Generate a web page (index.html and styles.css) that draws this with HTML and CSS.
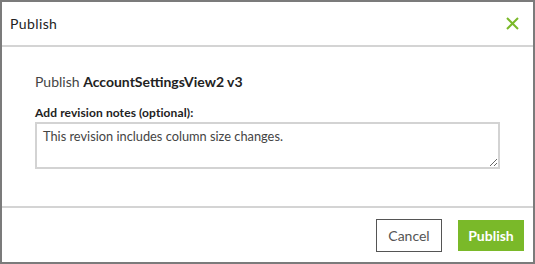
FILE: index.html
```html
<!DOCTYPE html>
<html lang="en">
<head>
<meta charset="UTF-8" />
<title>Publish</title>
<link rel="stylesheet" href="styles.css">
</head>
<body>
<div class="dialog">
  <div class="dialog-header">
    <span class="dialog-title">Publish</span>
    <button class="close" aria-label="Close">
      <svg width="13" height="13" viewBox="0 0 13 13"><path d="M1 1 L12 12 M12 1 L1 12" stroke="#7ab929" stroke-width="2" fill="none"/></svg>
    </button>
  </div>
  <div class="dialog-body">
    <p class="subject">Publish <b>AccountSettingsView2 v3</b></p>
    <label for="notes">Add revision notes (optional):</label>
    <textarea id="notes">This revision includes column size changes.</textarea>
  </div>
  <div class="dialog-footer">
    <button class="btn btn-cancel">Cancel</button>
    <button class="btn btn-publish">Publish</button>
  </div>
</div>
</body>
</html>
```

FILE: styles.css
```css
body {
  margin: 0;
  font-family: Lato, "Open Sans", sans-serif;
  color: #333;
}
.dialog {
  box-sizing: border-box;
  width: 535px;
  height: 264px;
  border: 2px solid #7b7b7b;
  display: flex;
  flex-direction: column;
  background: #fff;
}
.dialog-header {
  height: 43px;
  display: flex;
  align-items: center;
  justify-content: space-between;
  padding: 0 14px 0 8px;
  border-bottom: 2px solid #d4d4d4;
}
.dialog-title {
  font-size: 14px;
  color: #222;
  letter-spacing: 0.4px;
}
.close {
  border: none;
  background: none;
  padding: 0;
  width: 13px;
  height: 13px;
  cursor: pointer;
}
.dialog-body {
  flex: 1;
  padding: 26px 33px 0 33px;
}
.subject {
  margin: 0 0 15px;
  font-size: 14px;
  line-height: 17px;
  color: #444;
}
.subject b {
  color: #222;
}
label {
  display: block;
  font-size: 12px;
  line-height: 15px;
  font-weight: bold;
  color: #222;
  margin-bottom: 2px;
  letter-spacing: 0.1px;
}
textarea {
  display: block;
  box-sizing: border-box;
  width: 465px;
  height: 47px;
  border: 2px solid #d3d3d3;
  padding: 4px 6px;
  font-family: Lato, "Open Sans", sans-serif;
  font-size: 12.8px;
  color: #444;
  resize: vertical;
}
.dialog-footer {
  height: 54px;
  border-top: 2px solid #d4d4d4;
  display: flex;
  justify-content: flex-end;
  align-items: center;
  gap: 16px;
  padding-right: 9px;
}
.btn {
  width: 66px;
  font-family: Lato, "Open Sans", sans-serif;
  font-size: 14px;
  cursor: pointer;
}
.btn-cancel {
  height: 33px;
  background: #fff;
  border: 1px solid #555;
  color: #555;
}
.btn-publish {
  height: 31px;
  background: #7ab929;
  border: none;
  color: #fff;
  font-weight: bold;
}
```
